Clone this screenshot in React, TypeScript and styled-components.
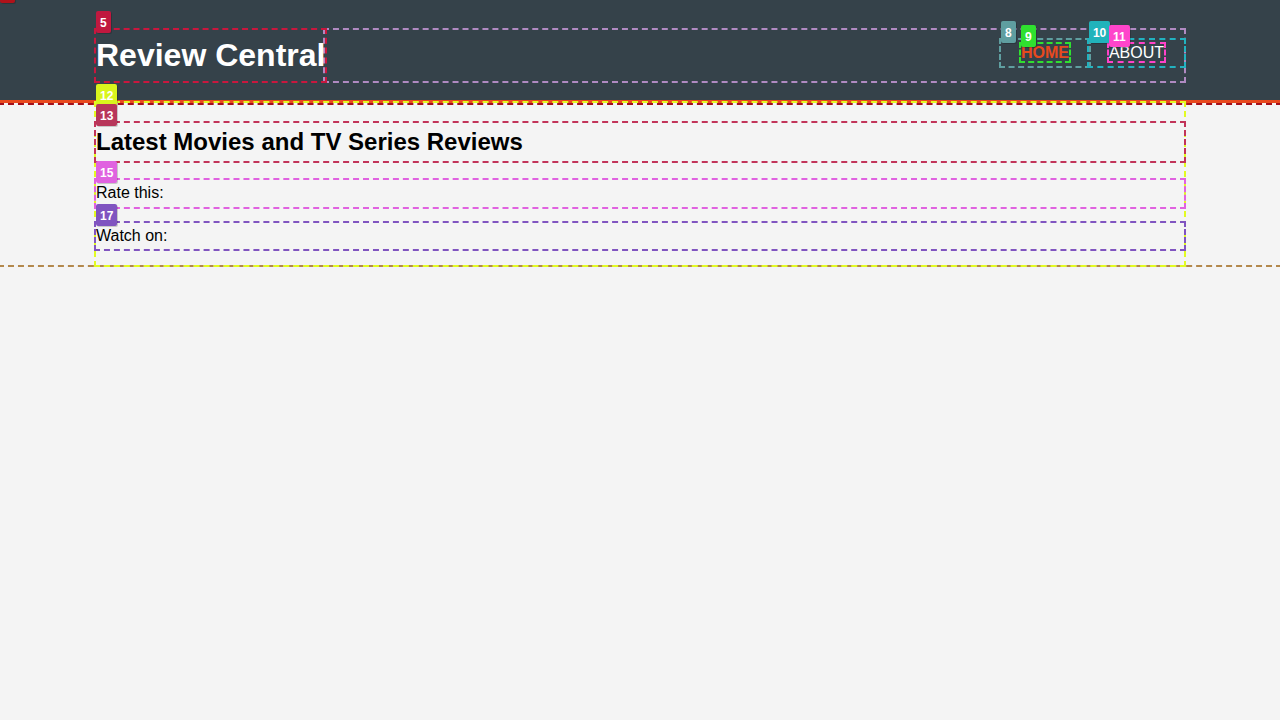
import React from "react";
import styled, { createGlobalStyle } from "styled-components";

const GlobalStyle = createGlobalStyle`
  html, body {
    margin: 0;
    padding: 0;
  }
  html {
    min-height: 100%;
  }
  body {
    min-height: 100vh;
    background: #f4f4f4;
    color: #000;
    font-family: "Liberation Sans", Arial, sans-serif;
    font-size: 16px;
    line-height: 1.6;
  }
`;

const Page = styled.div`
  position: relative;
  display: flow-root;
  outline: 2px dashed #b3884c;
`;

const Badge = styled.span<{ $bg: string }>`
  position: absolute;
  top: -19px;
  left: 0;
  z-index: 10;
  box-sizing: border-box;
  height: 22px;
  padding: 2px 4px 0;
  border-radius: 2px;
  background: ${(p) => p.$bg};
  color: #fff;
  font-family: "Liberation Sans", Arial, sans-serif;
  font-size: 12px;
  font-weight: 700;
  line-height: 20px;
  text-transform: none;
  white-space: nowrap;
  box-shadow: 1px 1px 0 rgba(0, 0, 0, 0.18);
`;

const Header = styled.header`
  position: relative;
  background: #35424a;
  color: #fff;
  padding-top: 30px;
  min-height: 70px;
  border-bottom: 3px solid #e8491d;
  outline: 2px dashed #a50f1a;
`;

const Container = styled.div`
  width: 85%;
  margin: 0 auto;
  position: relative;
`;

const HeaderInner = styled(Container)`
  display: flex;
  align-items: stretch;
`;

const Brand = styled.h1`
  position: relative;
  margin: 0;
  font-size: 32px;
  font-weight: 700;
  line-height: 1.6;
  outline: 2px dashed #c8173e;
`;

const Nav = styled.nav`
  flex: 1;
  display: flex;
  justify-content: flex-end;
  align-items: flex-start;
  padding-top: 10px;
  outline: 2px dashed #b08ac2;
`;

const NavList = styled.ul`
  display: flex;
  list-style: none;
  margin: 0;
  padding: 0;
`;

const NavItem = styled.li<{ $outline: string }>`
  position: relative;
  padding: 0 20px;
  outline: 2px dashed ${(p) => p.$outline};
`;

const NavLink = styled.a<{ $current?: boolean; $outline: string }>`
  position: relative;
  color: ${(p) => (p.$current ? "#e8491d" : "#fff")};
  font-weight: ${(p) => (p.$current ? 700 : 400)};
  text-decoration: none;
  text-transform: uppercase;
  outline: 2px dashed ${(p) => p.$outline};
`;

const Main = styled(Container)`
  display: flex;
  flex-direction: column;
  gap: 16px;
  padding: 20px 0 16px;
  outline: 2px dashed #e2fb22;
`;

const Heading = styled.h2`
  position: relative;
  margin: 0 0 3px;
  font-size: 24px;
  font-weight: 700;
  line-height: 1.6;
  outline: 2px dashed #c23459;
`;

const Row = styled.div<{ $outline: string; $tall?: boolean }>`
  position: relative;
  min-height: ${(p) => (p.$tall ? "27px" : "auto")};
  outline: 2px dashed ${(p) => p.$outline};
`;

export default function App() {
  return (
    <>
      <GlobalStyle />
      <Page>
        <Header>
          <Badge $bg="#b0121a">1</Badge>
          <HeaderInner>
            <Brand>
              <Badge $bg="#c0183f">5</Badge>
              Review Central
            </Brand>
            <Nav>
              <NavList>
                <NavItem $outline="#5f9ea0">
                  <Badge $bg="#5f9ea0">8</Badge>
                  <NavLink href="#" $current $outline="#2fe030">
                    <Badge $bg="#2fe02f">9</Badge>
                    Home
                  </NavLink>
                </NavItem>
                <NavItem $outline="#22b2bf">
                  <Badge $bg="#21b3bb">10</Badge>
                  <NavLink href="#" $outline="#ff42c8">
                    <Badge $bg="#ff45cb">11</Badge>
                    About
                  </NavLink>
                </NavItem>
              </NavList>
            </Nav>
          </HeaderInner>
        </Header>
        <Main>
          <Badge $bg="#d9f51d">12</Badge>
          <Heading>
            <Badge $bg="#b8365a">13</Badge>
            Latest Movies and TV Series Reviews
          </Heading>
          <Row $outline="#e062e0" $tall>
            <Badge $bg="#e062e0">15</Badge>
            Rate this:
          </Row>
          <Row $outline="#8054c0">
            <Badge $bg="#8054c0">17</Badge>
            Watch on:
          </Row>
        </Main>
      </Page>
    </>
  );
}
